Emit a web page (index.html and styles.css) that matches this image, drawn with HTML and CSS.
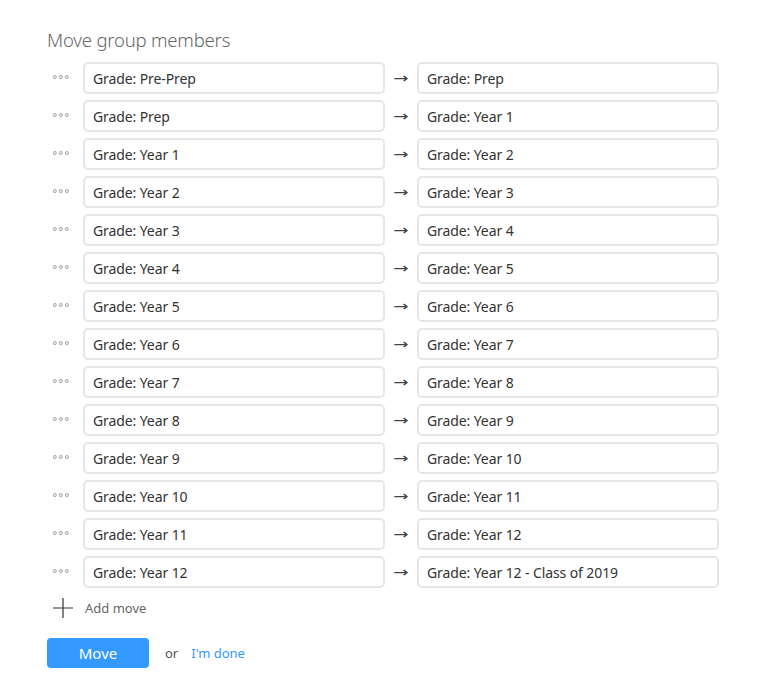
FILE: index.html
```html
<!DOCTYPE html>
<html>
<head>
<meta charset="utf-8">
<link rel="stylesheet" href="styles.css">
</head>
<body>
<div class="panel">
  <h1 class="title">Move group members</h1>
  <div class="rows">
    <div class="row"><span class="handle">°°°</span><div class="field">Grade: Pre-Prep</div><span class="arrow">→</span><div class="field">Grade: Prep</div></div>
    <div class="row"><span class="handle">°°°</span><div class="field">Grade: Prep</div><span class="arrow">→</span><div class="field">Grade: Year 1</div></div>
    <div class="row"><span class="handle">°°°</span><div class="field">Grade: Year 1</div><span class="arrow">→</span><div class="field">Grade: Year 2</div></div>
    <div class="row"><span class="handle">°°°</span><div class="field">Grade: Year 2</div><span class="arrow">→</span><div class="field">Grade: Year 3</div></div>
    <div class="row"><span class="handle">°°°</span><div class="field">Grade: Year 3</div><span class="arrow">→</span><div class="field">Grade: Year 4</div></div>
    <div class="row"><span class="handle">°°°</span><div class="field">Grade: Year 4</div><span class="arrow">→</span><div class="field">Grade: Year 5</div></div>
    <div class="row"><span class="handle">°°°</span><div class="field">Grade: Year 5</div><span class="arrow">→</span><div class="field">Grade: Year 6</div></div>
    <div class="row"><span class="handle">°°°</span><div class="field">Grade: Year 6</div><span class="arrow">→</span><div class="field">Grade: Year 7</div></div>
    <div class="row"><span class="handle">°°°</span><div class="field">Grade: Year 7</div><span class="arrow">→</span><div class="field">Grade: Year 8</div></div>
    <div class="row"><span class="handle">°°°</span><div class="field">Grade: Year 8</div><span class="arrow">→</span><div class="field">Grade: Year 9</div></div>
    <div class="row"><span class="handle">°°°</span><div class="field">Grade: Year 9</div><span class="arrow">→</span><div class="field">Grade: Year 10</div></div>
    <div class="row"><span class="handle">°°°</span><div class="field">Grade: Year 10</div><span class="arrow">→</span><div class="field">Grade: Year 11</div></div>
    <div class="row"><span class="handle">°°°</span><div class="field">Grade: Year 11</div><span class="arrow">→</span><div class="field">Grade: Year 12</div></div>
    <div class="row"><span class="handle">°°°</span><div class="field">Grade: Year 12</div><span class="arrow">→</span><div class="field">Grade: Year 12 - Class of 2019</div></div>
  </div>
  <div class="add">
    <svg class="plus" width="20" height="20" viewBox="0 0 20 20"><path d="M10 0V20M0 10H20" stroke="#333" stroke-width="1.2" fill="none"/></svg>
    <span class="add-label">Add move</span>
  </div>
  <div class="actions">
    <button class="btn">Move</button>
    <span class="or">or</span>
    <a class="done" href="#">I'm done</a>
  </div>
</div>
</body>
</html>
```
FILE: styles.css
```css
* { box-sizing: border-box; }
html, body { margin: 0; background: #fff; }
body { font-family: "Noto Sans", "Open Sans", sans-serif; color: #333; }
.panel { padding: 27px 0 0 47px; }
.title { margin: 0 0 9px; font-size: 18.5px; font-weight: 300; color: #666; line-height: 26px; letter-spacing: -0.2px; }
.rows { display: flex; flex-direction: column; gap: 6px; }
.row { display: flex; align-items: center; height: 32px; }
.handle { flex: none; width: 36px; padding-left: 5px; font-family: "DejaVu Sans", sans-serif; font-size: 11px; letter-spacing: 0.5px; color: #888; line-height: 1; position: relative; top: 1px; }
.field { flex: none; width: 302px; height: 32px; border: 2px solid #e6e6e6; border-radius: 5px; padding: 0 8px; font-size: 14px; line-height: 29px; color: #333; white-space: nowrap; letter-spacing: -0.1px; }
.arrow { flex: none; width: 32px; text-align: center; font-family: "DejaVu Sans", sans-serif; font-size: 14px; color: #444; line-height: 1; transform: scaleX(1.3); }
.add { display: flex; align-items: center; height: 20px; margin-top: 10px; margin-left: 6px; }
.plus { display: block; }
.add-label { margin-left: 12px; font-size: 13px; color: #666; }
.actions { display: flex; align-items: center; margin-top: 20px; }
.btn { width: 102px; height: 30px; border: 0; border-radius: 4px; background: #3399ff; color: #fff; font-family: inherit; font-size: 15px; padding: 0; }
.or { margin-left: 16px; font-size: 13px; color: #555; }
.done { margin-left: 13px; font-size: 13px; color: #3399ff; text-decoration: none; }
```
